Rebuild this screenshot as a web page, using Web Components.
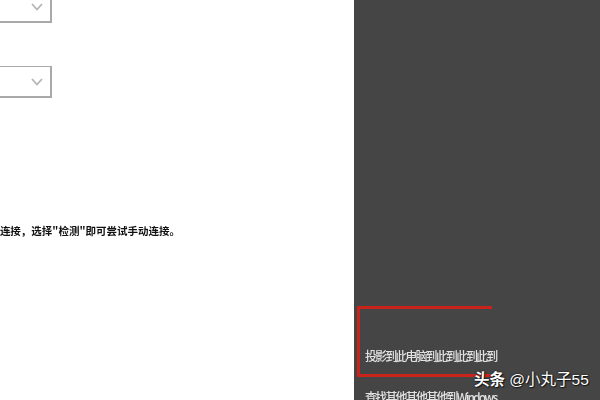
<!DOCTYPE html>
<html lang="zh">
<head>
<meta charset="utf-8">
<title>投影到此电脑</title>
<style>
    html, body { margin: 0; height: 100%; overflow: hidden; }
    body { font-family: "Liberation Sans", "Noto Sans CJK SC", sans-serif; }
</style>
</head>
<body>
<settings-page>
    <settings-pane slot="left">
        <select-box cut style="height: 23px"></select-box>
        <select-box style="height: 32px; margin-top: 43px"></select-box>
        <hint-text>连接，选择"检测"即可尝试手动连接。</hint-text>
    </settings-pane>
    <side-menu slot="right">
        <marked-item>投影到此电脑到此到此到此到</marked-item>
        <menu-line>查找其他其他其他到Windows</menu-line>
    </side-menu>
</settings-page>
<water-mark><b>头条</b> @小丸子55</water-mark>

<script>
    customElements.define(
        'settings-page',
        class extends HTMLElement {
            connectedCallback() {
                this.attachShadow({ mode: 'open' });
                this.shadowRoot.innerHTML = /* html */ `
                    <style>
                        :host {
                            display: grid;
                            grid-template-columns: 354px 246px;
                            width: 600px;
                            height: 400px;
                            overflow: hidden;
                        }
                    </style>
                    <slot name="left"></slot>
                    <slot name="right"></slot>
                `;
            }
        }
    );

    customElements.define(
        'settings-pane',
        class extends HTMLElement {
            connectedCallback() {
                this.attachShadow({ mode: 'open' });
                this.shadowRoot.innerHTML = /* html */ `
                    <style>
                        :host {
                            display: flex;
                            flex-direction: column;
                            align-items: flex-start;
                            background: #fff;
                            height: 400px;
                            overflow: hidden;
                        }
                    </style>
                    <slot></slot>
                `;
            }
        }
    );

    // the boxes run off the left edge, so only the right end with the chevron shows
    customElements.define(
        'select-box',
        class extends HTMLElement {
            connectedCallback() {
                this.attachShadow({ mode: 'open' });
                this.shadowRoot.innerHTML = /* html */ `
                    <style>
                        :host {
                            display: flex;
                            flex: none;
                            align-items: center;
                            justify-content: flex-end;
                            box-sizing: border-box;
                            width: 52px;
                            padding: 0 7px 0 0;
                            border: solid #a9a9a9;
                            border-width: 1px 2px 2px 0;
                            filter: blur(0.5px);
                        }
                        :host([cut]) { border-top: 0; padding-bottom: 7px; }
                        svg { display: block; width: 12px; height: 8px; }
                    </style>
                    <svg viewBox="0 0 12 8"><path d="M1 1l5 5.500 5-5.500" fill="none" stroke="#b4b4b4" stroke-width="1.800"/></svg>
                `;
            }
        }
    );

    customElements.define(
        'hint-text',
        class extends HTMLElement {
            connectedCallback() {
                this.attachShadow({ mode: 'open' });
                this.shadowRoot.innerHTML = /* html */ `
                    <style>
                        :host {
                            display: flex;
                            flex: none;
                            justify-content: flex-end;
                            width: 180px;
                            margin-top: 125px;
                            overflow: hidden;
                            white-space: nowrap;
                            font: 700 10.500px/16px "Noto Sans CJK SC", sans-serif;
                            color: #111;
                            filter: blur(0.5px);
                        }
                    </style>
                    <slot></slot>
                `;
            }
        }
    );

    customElements.define(
        'side-menu',
        class extends HTMLElement {
            connectedCallback() {
                this.attachShadow({ mode: 'open' });
                this.shadowRoot.innerHTML = /* html */ `
                    <style>
                        :host {
                            display: flex;
                            flex-direction: column;
                            box-sizing: border-box;
                            height: 400px;
                            padding: 306px 0 0 3px;
                            background: #454545;
                            overflow: hidden;
                        }
                    </style>
                    <slot></slot>
                `;
            }
        }
    );

    customElements.define(
        'marked-item',
        class extends HTMLElement {
            connectedCallback() {
                this.attachShadow({ mode: 'open' });
                this.shadowRoot.innerHTML = /* html */ `
                    <style>
                        :host {
                            display: flex;
                            flex: none;
                            align-items: flex-end;
                            box-sizing: border-box;
                            width: 135px;
                            height: 71px;
                            padding: 0 0 11px 5px;
                            border: solid #c8241c;
                            border-width: 3px 0 3px 3px;
                            color: #e2e2e2;
                        }
                        span {
                            flex: none;
                            white-space: nowrap;
                            font: 500 12px/14px "Noto Sans CJK SC", sans-serif;
                            letter-spacing: -1.900px;
                            filter: blur(0.6px);
                        }
                    </style>
                    <span><slot></slot></span>
                `;
            }
        }
    );

    customElements.define(
        'menu-line',
        class extends HTMLElement {
            connectedCallback() {
                this.attachShadow({ mode: 'open' });
                this.shadowRoot.innerHTML = /* html */ `
                    <style>
                        :host {
                            display: block;
                            flex: none;
                            margin: 13px 0 0 8px;
                            white-space: nowrap;
                            font: 500 12px/14px "Noto Sans CJK SC", sans-serif;
                            letter-spacing: -1.800px;
                            color: #e2e2e2;
                            filter: blur(0.6px);
                        }
                    </style>
                    <slot></slot>
                `;
            }
        }
    );

    customElements.define(
        'water-mark',
        class extends HTMLElement {
            connectedCallback() {
                this.attachShadow({ mode: 'open' });
                this.shadowRoot.innerHTML = /* html */ `
                    <style>
                        :host {
                            position: absolute;
                            left: 474px;
                            top: 371px;
                            white-space: nowrap;
                            font: 400 15.500px/18px "Liberation Sans", "Noto Sans CJK SC", sans-serif;
                            color: #fff;
                            text-shadow: 0 0 2px #000, 1px 1px 1px rgba(0, 0, 0, .6);
                        }
                    </style>
                    <slot></slot>
                `;
            }
        }
    );
</script>
</body>
</html>
